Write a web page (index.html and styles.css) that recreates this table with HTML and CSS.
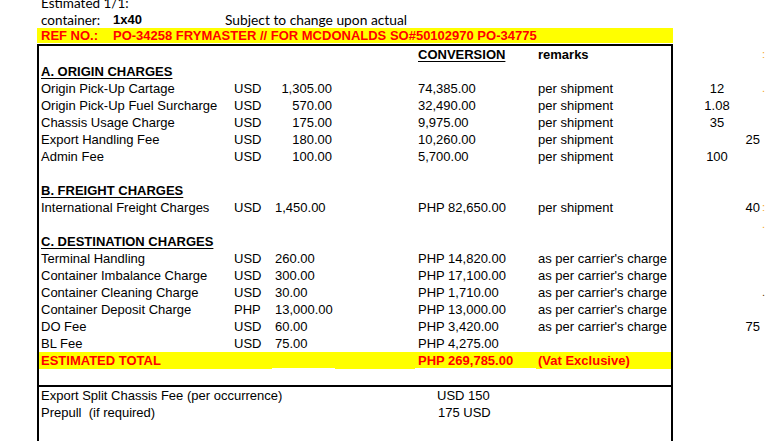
FILE: index.html
```html
<!DOCTYPE html>
<html>
<head>
<meta charset="utf-8">
<link rel="stylesheet" href="styles.css">
</head>
<body>
<div class="sheet">
  <div class="pre-row cal"><span class="pl">Estimated 1/1:</span></div>
  <div class="pre-row cal">
    <span class="pl pre-lbl">container:</span>
    <span class="pre-val b arial">1x40</span>
    <span class="subj">Subject to change upon actual</span>
  </div>
  <div class="pre-row ref">
    <span class="pl pre-lbl">REF NO.:</span>
    <span>PO-34258 FRYMASTER // FOR MCDONALDS SO#50102970 PO-34775</span>
  </div>

  <div class="main">
    <div class="box">
      <div class="r"><span></span><span></span><span></span><span></span><span class="cv b u">CONVERSION</span><span class="rm b">remarks</span></div>
      <div class="r"><span class="lb b u hd">A. ORIGIN CHARGES</span></div>
      <div class="r"><span class="lb">Origin Pick-Up Cartage</span><span class="cu">USD</span><span class="am ra">1,305.00</span><span></span><span class="cv">74,385.00</span><span class="rm">per shipment</span></div>
      <div class="r"><span class="lb">Origin Pick-Up Fuel Surcharge</span><span class="cu">USD</span><span class="am ra">570.00</span><span></span><span class="cv">32,490.00</span><span class="rm">per shipment</span></div>
      <div class="r"><span class="lb">Chassis Usage Charge</span><span class="cu">USD</span><span class="am ra">175.00</span><span></span><span class="cv">9,975.00</span><span class="rm">per shipment</span></div>
      <div class="r"><span class="lb">Export Handling Fee</span><span class="cu">USD</span><span class="am ra">180.00</span><span></span><span class="cv">10,260.00</span><span class="rm">per shipment</span></div>
      <div class="r"><span class="lb">Admin Fee</span><span class="cu">USD</span><span class="am ra">100.00</span><span></span><span class="cv">5,700.00</span><span class="rm">per shipment</span></div>
      <div class="r"></div>
      <div class="r"><span class="lb b u hd">B. FREIGHT CHARGES</span></div>
      <div class="r"><span class="lb">International Freight Charges</span><span class="cu">USD</span><span class="am">1,450.00</span><span></span><span class="cv">PHP 82,650.00</span><span class="rm">per shipment</span></div>
      <div class="r"></div>
      <div class="r"><span class="lb b u hd">C. DESTINATION CHARGES</span></div>
      <div class="r"><span class="lb">Terminal Handling</span><span class="cu">USD</span><span class="am">260.00</span><span></span><span class="cv">PHP 14,820.00</span><span class="rm">as per carrier's charge</span></div>
      <div class="r"><span class="lb">Container Imbalance Charge</span><span class="cu">USD</span><span class="am">300.00</span><span></span><span class="cv">PHP 17,100.00</span><span class="rm">as per carrier's charge</span></div>
      <div class="r"><span class="lb">Container Cleaning Charge</span><span class="cu">USD</span><span class="am">30.00</span><span></span><span class="cv">PHP 1,710.00</span><span class="rm">as per carrier's charge</span></div>
      <div class="r"><span class="lb">Container Deposit Charge</span><span class="cu">PHP</span><span class="am">13,000.00</span><span></span><span class="cv">PHP 13,000.00</span><span class="rm">as per carrier's charge</span></div>
      <div class="r"><span class="lb">DO Fee</span><span class="cu">USD</span><span class="am">60.00</span><span></span><span class="cv">PHP 3,420.00</span><span class="rm">as per carrier's charge</span></div>
      <div class="r"><span class="lb">BL Fee</span><span class="cu">USD</span><span class="am">75.00</span><span></span><span class="cv">PHP 4,275.00</span><span></span></div>
      <div class="r total"><span class="lb">ESTIMATED TOTAL</span><span></span><span class="wb"></span><span></span><span class="cv wb">PHP 269,785.00</span><span class="rm">(Vat Exclusive)</span></div>
      <div class="r gap"></div>
      <div class="lower">
        <div class="r"><span class="lb">Export Split Chassis Fee (per occurrence)</span><span></span><span></span><span></span><span class="cv alt">USD 150</span><span></span></div>
        <div class="r"><span class="lb">Prepull&nbsp; (if required)</span><span></span><span></span><span></span><span class="cv alt2">175 USD</span><span></span></div>
      </div>
    </div>

    <div class="side">
      <div class="s"><span></span><span></span><span class="or">:</span></div>
      <div class="s"></div>
      <div class="s"><span class="sc">12</span><span></span><span class="or">.</span></div>
      <div class="s"><span class="sc">1.08</span></div>
      <div class="s"><span class="sc">35</span></div>
      <div class="s"><span></span><span class="sr">25</span></div>
      <div class="s"><span class="sc">100</span></div>
      <div class="s"></div>
      <div class="s"></div>
      <div class="s"><span></span><span class="sr">40</span><span class="or">:</span></div>
      <div class="s"><span></span><span></span><span class="or">.</span></div>
      <div class="s"></div>
      <div class="s"></div>
      <div class="s"></div>
      <div class="s"><span></span><span></span><span class="dk">.</span></div>
      <div class="s"></div>
      <div class="s"><span></span><span class="sr">75</span></div>
    </div>
  </div>
</div>
</body>
</html>
```

FILE: styles.css
```css
html, body {
  margin: 0;
  padding: 0;
  background: #ffffff;
  overflow: hidden;
}

body {
  font-family: "Liberation Sans", Arial, sans-serif;
  font-size: 13px;
  color: #000000;
  width: 765px;
  height: 441px;
}

.sheet {
  margin: -6px 0 0 37px;
}

.pre-row {
  display: flex;
  align-items: center;
  height: 17px;
  white-space: nowrap;
}

.cal {
  font-family: Lato, "Open Sans", sans-serif;
  font-size: 13.5px;
}

.subj {
  font-size: 13.8px;
}

.arial {
  font-family: "Liberation Sans", Arial, sans-serif;
  font-size: 13px;
}

.pl {
  padding-left: 4px;
}

.pre-lbl {
  width: 72px;
}

.pre-val {
  width: 112px;
}

.ref {
  width: 636px;
  height: 15px;
  border-bottom: 1px solid #ffffff;
  background: #ffff00;
  color: #ff0000;
  font-weight: bold;
}

.b { font-weight: bold; }
.u { text-decoration: underline; text-underline-offset: 2px; }

.main {
  display: flex;
}

.box {
  width: 632px;
  border-top: 2px solid #000;
  border-left: 2px solid #000;
  border-right: 2px solid #000;
  padding-bottom: 20px;
}

.r {
  display: grid;
  grid-template-columns: 193px 40px 63px 80px 121px 135px;
  height: 17px;
  align-items: center;
  white-space: nowrap;
}

.r > span {
  height: 17px;
  line-height: 17px;
}

.lb { padding-left: 2px; }
.hd { overflow: visible; }
.cu { padding-left: 2px; }
.am { padding-left: 3px; }
.ra { text-align: right; padding-right: 3px; padding-left: 0; }
.cv { padding-left: 3px; }
.rm { padding-left: 2px; }

.total {
  background: #ffff00;
  color: #ff0000;
  font-weight: bold;
}

.total .wb {
  box-sizing: border-box;
  border-bottom: 1px solid #ffffff;
}

.gap {
  height: 16px;
  border-bottom: 2px solid #000;
}

.alt { padding-left: 22px; }
.alt2 { padding-left: 23px; }

.side {
  padding-top: 2px;
  padding-left: 17px;
}

.s {
  display: grid;
  grid-template-columns: 54px 16px 20px;
  height: 17px;
  line-height: 17px;
  white-space: nowrap;
}

.sc { text-align: center; }
.sr { text-align: right; }

.or {
  color: #f5a623;
  padding-left: 2px;
  font-size: 11px;
}

.dk {
  color: #6b3a00;
  padding-left: 2px;
  font-size: 11px;
}
```
